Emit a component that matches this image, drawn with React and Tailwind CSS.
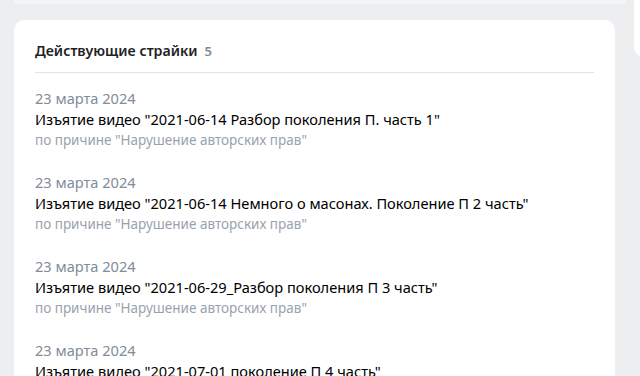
const strikes = [
  { date: '23 марта 2024', title: 'Изъятие видео "2021-06-14 Разбор поколения П. часть 1"' },
  { date: '23 марта 2024', title: 'Изъятие видео "2021-06-14 Немного о масонах. Поколение П 2 часть"' },
  { date: '23 марта 2024', title: 'Изъятие видео "2021-06-29_Разбор поколения П 3 часть"' },
  { date: '23 марта 2024', title: 'Изъятие видео "2021-07-01 поколение П 4 часть"' },
];

export default function App() {
  return (
    <div
      className="h-[376px] w-[640px] overflow-hidden bg-[#edeef0] flex flex-col"
      style={{ fontFamily: '"Noto Sans", "Open Sans", sans-serif' }}
    >
      <div className="h-[4px] mx-[14px] bg-[#f3f4f5] shrink-0" />
      <div className="flex gap-[19px] pt-[16px] items-start">
        <div className="ml-[14px] w-[601px] shrink-0 bg-white rounded-t-[10px] px-[21px] pt-[20px] h-[400px]">
          <div className="flex items-baseline gap-[7px] h-[33px] border-b border-[#e1e3e6]">
            <span className="text-[14.2px] font-semibold text-[#222]">Действующие страйки</span>
            <span className="text-[13px] font-semibold text-[#818c99]">5</span>
          </div>
          <div className="pt-[15px] flex flex-col gap-[21px]">
            {strikes.map((s, i) => (
              <div key={i} className="flex flex-col">
                <span className="text-[14.6px] leading-[21px] text-[#818c99]">{s.date}</span>
                <span className="text-[14.6px] leading-[21px] text-[#000]">{s.title}</span>
                <span className="text-[13.5px] leading-[21px] text-[#99a2ad]">
                  по причине "Нарушение авторских прав"
                </span>
              </div>
            ))}
          </div>
        </div>
        <div className="-mt-[20px] w-[20px] h-[57px] bg-white rounded-bl-[10px] shrink-0" />
      </div>
    </div>
  );
}
